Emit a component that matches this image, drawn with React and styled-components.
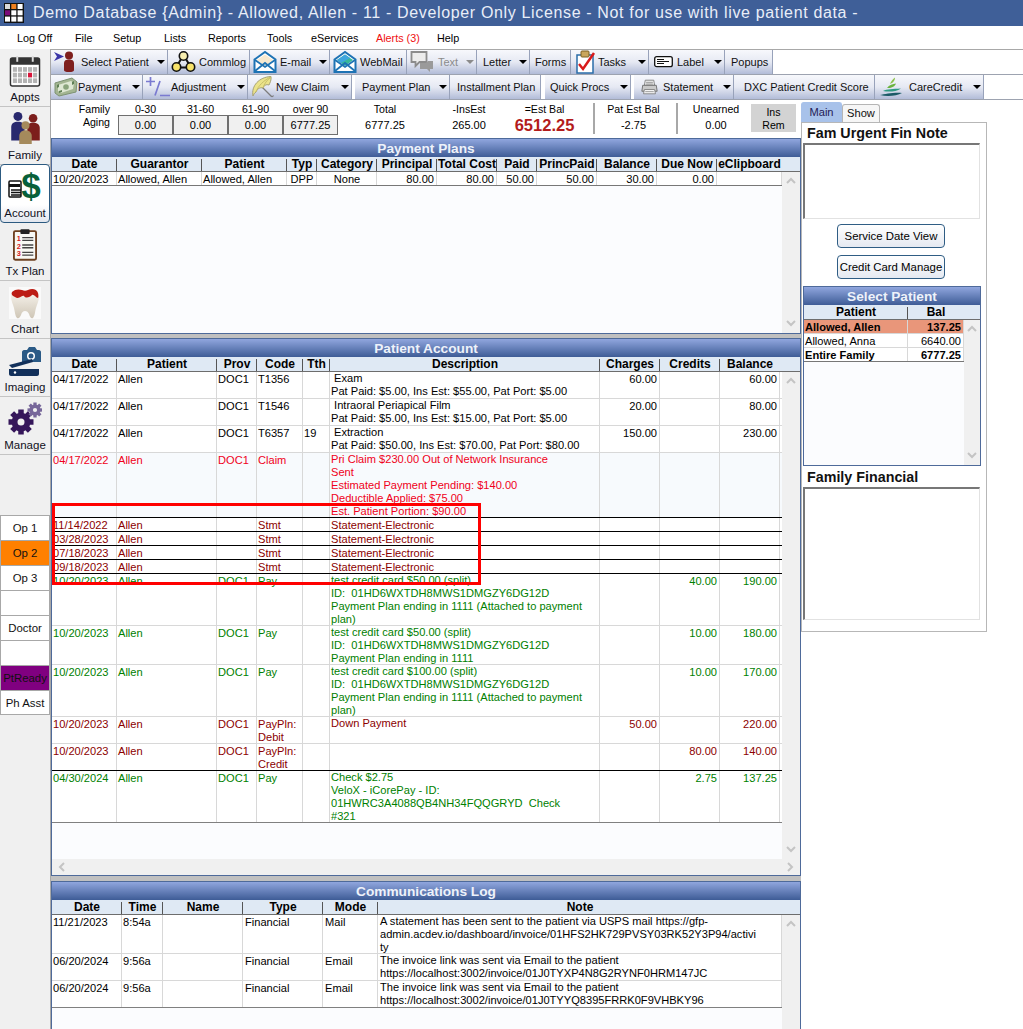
import React from "react";
import styled, { createGlobalStyle } from "styled-components";

const SANS = '"Liberation Sans", Arial, sans-serif';

const Global = createGlobalStyle`
  html, body { margin: 0; padding: 0; background: #fff; }
  body { font-family: ${SANS}; font-size: 11.1px; color: #000; }
  * { box-sizing: border-box; }
`;

const Root = styled.div`
  width: 1023px; height: 1029px; overflow: hidden;
  display: flex; flex-direction: column; background: #fff;
`;
const TitleBar = styled.div`
  height: 26px; flex: none; background: #3f5f98; color: #e9eef8;
  display: flex; align-items: center; padding-left: 4px; gap: 9px;
  font-size: 16px; letter-spacing: 0.65px; white-space: pre;
`;
const MenuBar = styled.div`
  height: 23px; flex: none; display: flex; align-items: center; padding-left: 17px;
  background: #fff; font-size: 10.8px;
`;
const MenuItem = styled.div`
  width: ${p => p.$w}px; flex: none; color: ${p => (p.$alert ? "#f01010" : "#000")};
`;
const Body = styled.div`
  flex: 1; display: flex; min-height: 0;
`;
const Rail = styled.div`
  width: 51px; flex: none; background: #f0f0f0; border-right: 1px solid #a8a8a8;
  display: flex; flex-direction: column;
`;
const RailButton = styled.div`
  height: 58px; width: 50px; flex: none; display: flex; flex-direction: column;
  align-items: center; justify-content: flex-end; padding-bottom: 2px;
  border-bottom: 1px solid #c4c4c4; font-size: 11.5px; line-height: 14px;
  color: #112; background: ${p => (p.$active ? "linear-gradient(#fff 70%, #e2e6ee)" : "transparent")};
  ${p => p.$active && "border: 1px solid #2c5a80; border-radius: 4px; margin-top:-1px; height:59px;"}
  svg { display: block; margin-bottom: 3px; flex: none; }
`;
const OpStack = styled.div`
  margin-top: 60px; display: flex; flex-direction: column;
`;
const OpButton = styled.div`
  height: 25px; width: 50px; background: ${p => p.$bg || "#fff"};
  border: 1px solid #a8a8a8; border-bottom-width: 0; display: flex;
  align-items: center; justify-content: center; font-size: 11.4px;
  color: #111; &:last-child { border-bottom-width: 1px; }
`;
const Main = styled.div`
  flex: 1; min-width: 0; display: flex; flex-direction: column;
`;
const Toolbars = styled.div`
  flex: none; border-top: 1px solid #a8a8a8;
`;
const ToolRow = styled.div`
  height: 25px; display: flex; border-bottom: 1px solid #9da3b0; background: #fff;
`;
const ToolButton = styled.div`
  width: ${p => p.$w}px; flex: none; height: 24px; display: flex; align-items: center;
  padding-left: ${p => p.$pl || 3}px; margin-left: ${p => p.$gap || 0}px;
  background: linear-gradient(#f7f8fc, #e6e9f3 50%, #b2bcd8);
  border-right: 1px solid #98a2ba; white-space: nowrap;
  font-size: 11px; color: ${p => (p.$off ? "#8b8b8b" : "#111")};
  svg { flex: none; margin-right: ${p => p.$iconGap ?? 3}px; }
`;
const Caret = styled.span`
  margin-left: auto; margin-right: 2px; width: 0; height: 0; flex: none;
  border-left: 4px solid transparent; border-right: 4px solid transparent;
  border-top: 4px solid ${p => (p.$off ? "#8b8b8b" : "#000")};
`;
const Lower = styled.div`
  flex: 1; min-height: 0; display: flex;
`;
const LeftCol = styled.div`
  width: 750px; flex: none; display: flex; flex-direction: column; background: #c0c0c0;
`;
const AgingBar = styled.div`
  height: 38px; flex: none; display: flex; background: #fff; padding-top: 3px; line-height: 13px;
  font-size: 10.6px;
`;
const FamilyLabel = styled.div`
  width: 59px; flex: none; text-align: right;
`;
const AgingColumns = styled.div`
  margin-left: 8px; display: grid; grid-template-columns: repeat(4, 55px); flex: none; width: 220px;
`;
const AgingColumn = styled.div`
  display: flex; flex-direction: column; align-items: center;
`;
const AgingCaption = styled.div`
  height: 12px; line-height: 12px;
`;
const AgingBox = styled.div`
  width: 55px; height: 20px; border: 1px solid #6f6f6f; background: #f0f0f0; text-align: center;
  line-height: 19px; font-size: 11px;
`;
const Stat = styled.div`
  width: ${p => p.$w}px; margin-left: ${p => p.$ml || 0}px; margin-right: ${p => p.$mr || 0}px;
  flex: none; text-align: center; display: flex; flex-direction: column; gap: 2px;
`;
const StatValue = styled.div`
  font-size: ${p => (p.$big ? "16.5px" : "11px")}; font-weight: ${p => (p.$big ? 700 : 400)};
  color: ${p => (p.$big ? "#b31b1b" : "inherit")}; line-height: 15px;
`;
const StatDivider = styled.div`
  width: 2px; height: 31px; background: #a8a8a8; flex: none;
`;
const InsRem = styled.div`
  width: 45px; height: 28px; margin-top: 1px; background: #d3d3d3; flex: none; text-align: center; padding-top: 2px;
`;
const Panel = styled.div`
  height: ${p => p.$h}px; margin-top: ${p => p.$mt || 0}px; flex: none; border: 1px solid #4e6a9a;
  background: #fbfcfe; display: flex; flex-direction: column; overflow: hidden;
`;
const PanelTitle = styled.div`
  height: 18px; flex: none; line-height: 19px; text-align: center; color: #eef2fa;
  font-weight: 700; font-size: 13.7px;
  background: linear-gradient(#90a6de, #3e5c96);
`;
const HeaderRow = styled.div`
  height: 15px; flex: none; display: grid; grid-template-columns: ${p => p.$cols};
  background: #dfe9f4; border-bottom: 1px solid #6d6d6d;
`;
const HeaderCell = styled.div`
  position: relative; text-align: center; font-weight: 700; font-size: 12px; line-height: 15px;
  white-space: nowrap; overflow: visible;
  &::after {
    content: ${p => (p.$last ? "none" : '""')}; position: absolute; right: 0; top: 2px; bottom: 1px;
    width: 1px; background: #555;
  }
`;
const GridBody = styled.div`
  flex: 1; min-height: 0; display: flex;
`;
const GridTable = styled.div`
  width: ${p => p.$w}px; flex: none;
`;
const Row = styled.div`
  height: ${p => p.$h}px; display: grid; grid-template-columns: ${p => p.$cols};
  border-bottom: 1px solid ${p => p.$line || "#d8d8d8"};
  background: ${p => p.$bg || "#fff"}; color: ${p => p.$color || "#000"};
  line-height: 13px; overflow: hidden;
`;
const Cell = styled.div`
  border-right: 1px solid #d8d8d8;
  padding: ${p => (p.$flush ? 0 : 1)}px ${p => (p.$align === "right" ? 2 : 0)}px 0 ${p => (p.$align === "right" ? 0 : p.$pl ?? 1)}px;
  text-align: ${p => p.$align || "left"}; white-space: pre; overflow: hidden;
  font-weight: ${p => (p.$bold ? 700 : 400)};
`;
const VScroll = styled.div`
  flex: 1; min-width: 0; background: #f0f0f0; display: flex; flex-direction: column;
  justify-content: space-between; align-items: center; padding: 5px 0 6px;
`;
const HScroll = styled.div`
  height: 16px; flex: none; background: #f0f0f0; display: flex; justify-content: space-between;
  align-items: center; padding: 0 6px;
`;
const Overlay = styled.div`
  position: relative;
`;
const Highlight = styled.div`
  position: absolute; left: 1px; top: 169px; width: 429px; height: 82px; border: 3px solid #f00; pointer-events: none;
`;
const RightCol = styled.div`
  width: 186px; flex: none; padding-top: 2px;
`;
const Tabs = styled.div`
  height: 20px; display: flex; align-items: flex-end;
`;
const Tab = styled.div`
  height: ${p => (p.$on ? 20 : 18)}px; width: ${p => (p.$on ? 41 : 38)}px; text-align: center;
  line-height: ${p => (p.$on ? 19 : 17)}px; border-radius: 3px 3px 0 0;
  background: ${p => (p.$on ? "#a8c2ea" : "#f6f6f6")}; color: ${p => (p.$on ? "#241a55" : "#111")};
  border: 1px solid ${p => (p.$on ? "#a8c2ea" : "#b5b5b5")}; border-bottom: 0;
`;
const SidePanel = styled.div`
  height: 510px; border: 1px solid #b7b7b7; background: #fff; padding: 2px 1px 0 1px;
  display: flex; flex-direction: column; align-items: flex-start;
`;
const SideHeading = styled.div`
  font-weight: 700; font-size: 14.3px; line-height: 17px; padding-left: 4px; height: 18px; margin-top: ${p => p.$mt || 0}px; color: #111;
`;
const NoteBox = styled.div`
  width: 177px; height: ${p => p.$h}px; border-style: solid; border-width: 2px 1px 1px 2px;
  border-color: #777 #e2e2e2 #e2e2e2 #777; background: #fff; flex: none;
`;
const SideButton = styled.div`
  width: 108px; height: 24px; border: 1px solid #2f5d84; border-radius: 4px; margin: ${p => p.$mt}px 0 0 34px;
  background: linear-gradient(#fff, #e5e9f1); display: flex; align-items: center; justify-content: center;
  white-space: nowrap; flex: none; font-size: 11.4px;
`;
const SelectPanel = styled(Panel)`
  width: 178px;
`;

const Chevron = ({ dir }) => {
  const pts = { up: "1,6 5,2 9,6", down: "1,2 5,6 9,2", left: "6,1 2,5 6,9", right: "2,1 6,5 2,9" }[dir];
  const w = dir === "left" || dir === "right" ? 8 : 10;
  const h = dir === "left" || dir === "right" ? 10 : 8;
  return (
    <svg width={w} height={h} viewBox={`0 0 ${w} ${h}`}>
      <polyline points={pts} fill="none" stroke="#c4c4c4" strokeWidth="2" />
    </svg>
  );
};

const Logo = () => (
  <svg width="20" height="20" viewBox="0 0 20 20">
    <rect width="20" height="20" fill="#111" />
    {[0, 1, 2].flatMap(r => [0, 1, 2].map(c => {
      const fill = r === 0 && c === 1 ? "#f08020" : r === 1 && c === 0 ? "#7a0a7a" : r === 0 && c === 0 ? "#d8d8d8" : "#fff";
      return <rect key={`${r}${c}`} x={1 + c * 6.3} y={1 + r * 6.3} width="5" height="5" fill={fill} />;
    }))}
  </svg>
);

const IcoSelect = () => (
  <svg width="25" height="24" viewBox="0 0 25 24">
    <path d="M1 2l10 4.5L1 11l3-4.5z" fill="#3a35a8" />
    <circle cx="16" cy="5.5" r="4" fill="#7e1f1f" />
    <path d="M11 20v-7c0-2.5 2-3.5 5-3.5s5 1 5 3.5v7c0 1.5-1.5 2-5 2s-5-.5-5-2z" fill="#7e1f1f" />
  </svg>
);
const IcoCommlog = () => (
  <svg width="25" height="24" viewBox="0 0 25 24">
    <path d="M12.5 5L5 17.5h15z" fill="none" stroke="#111" strokeWidth="2" />
    <circle cx="12.5" cy="6" r="4.2" fill="#f7eeb0" stroke="#111" strokeWidth="1.6" />
    <circle cx="5.5" cy="17" r="4.2" fill="#f7e26a" stroke="#111" strokeWidth="1.6" />
    <circle cx="19.5" cy="17" r="4.2" fill="#f7e26a" stroke="#111" strokeWidth="1.6" />
  </svg>
);
const IcoMail = ({ web }) => (
  <svg width="24" height="24" viewBox="0 0 24 24">
    <path d="M1.5 9.5L12 2l10.500 7.500V22h-21z" fill="#fff" stroke="#1e73b4" strokeWidth="2" />
    <path d="M4 10l8-5.500L20 10l-8 6z" fill={web ? "#38b89a" : "#f7e9cf"} />
    {web && <path d="M4 10l8-5.500 5 3.500-9 5z" fill="#3fa6de" />}
    <path d="M2 21l10-8 10 8M2 10l10 7 10-7" fill="none" stroke="#1e73b4" strokeWidth="1.800" />
  </svg>
);
const IcoText = () => (
  <svg width="25" height="24" viewBox="0 0 25 24">
    <path d="M1.500 2h15v10h-7l-4 4v-4h-4z" fill="#ececec" stroke="#8c8c8c" strokeWidth="1.800" />
    <path d="M10 13h6l2-2h5v8h-3v3l-3-3h-7z" fill="#9a9a9a" />
  </svg>
);
const IcoMoney = () => (
  <svg width="24" height="20" viewBox="0 0 24 20">
    <path d="M1 6l17-5 5 4-1 10-17 4-4-3z" fill="#a3b592" stroke="#7d9272" />
    <path d="M4 8l13-4 3 2-1 6-12 4-3-2z" fill="#dfe8d4" />
    <circle cx="12" cy="10" r="2.800" fill="#8aa47c" />
    <path d="M3 8l2-1v3l-2 1zM18 5l2-1v3l-2 1zM5 14l3-1v2l-3 1z" fill="#5f7f55" />
  </svg>
);
const IcoAdjust = () => (
  <svg width="25" height="22" viewBox="0 0 25 22">
    <path d="M0 5.500h9M4.500 1v9M9 19.500L14 5M14 19.500h10" stroke="#7a7ad0" strokeWidth="1.700" fill="none" />
  </svg>
);
const IcoUmbrella = () => (
  <svg width="25" height="24" viewBox="0 0 25 24">
    <path d="M11 12l9 9c1 1 2 .500 2.500-.500" fill="none" stroke="#7c7c7c" strokeWidth="1.300" />
    <path d="M2 21C0 11 8 2 20 1.500c.5 4-1 6-2 8.500-3-1-5 .5-6 3-3-1-6 1-7 4-1.500 1-2.500 2.500-3 4z" fill="#ebe38a" stroke="#a7a278" />
    <path d="M5 17C7 11 13 5 20 2M12 13c1-4 4-8 8-11" fill="none" stroke="#c9c06a" />
  </svg>
);
const IcoPrinter = () => (
  <svg width="17" height="16" viewBox="0 0 20 18">
    <path d="M5 1h10l1 6H4z" fill="#f2f2f2" stroke="#777" />
    <path d="M2 7h16l1 7H1z" fill="#c9c9c9" stroke="#666" />
    <path d="M4 12h12l1 5H3z" fill="#fafafa" stroke="#777" />
    <path d="M6 3.500h8M6 5.500h8M5 14.500h10" stroke="#888" />
  </svg>
);
const IcoTasks = () => (
  <svg width="20" height="24" viewBox="0 0 20 24">
    <rect x="1" y="5" width="16" height="18" fill="#fff" stroke="#2a6ca8" strokeWidth="1.500" />
    <rect x="5" y="1" width="8" height="6" rx="1" fill="#c9a65c" stroke="#7c6020" />
    <path d="M3 14l4 5L18 3" fill="none" stroke="#d81a1a" strokeWidth="2.500" />
  </svg>
);
const IcoLabel = () => (
  <svg width="19" height="12" viewBox="0 0 19 12">
    <rect x=".7" y=".7" width="17.600" height="10" rx="2" fill="#fff" stroke="#111" strokeWidth="1.300" />
    <path d="M3 3.500h7M3 5.500h12M3 7.500h7" stroke="#111" />
  </svg>
);
const IcoCare = () => (
  <svg width="24" height="20" viewBox="0 0 24 20">
    <path d="M1 18C6 17 16 15 23 16c-5 3-15 4-22 2z" fill="#1a5a66" />
    <path d="M4 14C8 12 14 12 22 11.500 17 15 9 15 4 14z" fill="#2f9a84" />
    <path d="M8 11c2-3 6-4 9-4.500-1 3-5 5-9 4.500z" fill="#6cb33f" />
    <path d="M11 7c1-3 3-5 5-6.500 0 2-1 5-5 6.500z" fill="#8cc24a" />
  </svg>
);

const BigCalendar = () => (
  <svg width="32" height="32" viewBox="0 0 32 33">
    <rect x="1" y="3" width="30" height="29" rx="2" fill="#fff" stroke="#333" strokeWidth="1.500" />
    <path d="M1 10V5c0-1.500 1-2 2-2h26c1 0 2 .5 2 2v5z" fill="#333" />
    <rect x="7" y="1" width="2" height="6" fill="#ddd" /><rect x="23" y="1" width="2" height="6" fill="#ddd" />
    {[0, 1, 2].flatMap(r => [0, 1, 2, 3, 4].map(c => (
      <rect key={`${r}-${c}`} x={3.5 + c * 5.2} y={12.5 + r * 5.8} width="4.200" height="4.800"
        fill={r === 1 && c === 3 ? "#d8143a" : "#b4b4b4"} />
    )))}
  </svg>
);
const BigFamily = () => (
  <svg width="31" height="33" viewBox="0 0 34 37">
    <circle cx="8.500" cy="5" r="5" fill="#29296e" />
    <path d="M1 32V17c0-4 3-6 7.500-6S16 13 16 17v15z" fill="#29296e" />
    <circle cx="25.500" cy="7" r="4.800" fill="#7c1e1c" />
    <path d="M19 32V18c0-4 2-6 6.500-6s7.500 2 7.500 6v14z" fill="#7c1e1c" />
    <circle cx="17" cy="15" r="4.500" fill="#a58a5c" />
    <path d="M10 36V27c0-4 3-6.500 7-6.500s7 2.500 7 6.500v9z" fill="#a58a5c" />
  </svg>
);
const BigAccount = () => (
  <svg width="34" height="32" viewBox="0 0 34 32" overflow="visible">
    <rect x="1" y="10" width="12" height="16" rx="1" fill="#fff" stroke="#111" strokeWidth="1.500" />
    <rect x="1" y="13" width="11" height="3" fill="#111" />
    <path d="M3 19h10M3 21.500h10M3 24h10" stroke="#111" strokeWidth="1.300" />
    <text x="23" y="27" textAnchor="middle" fontFamily={SANS} fontWeight="700" fontSize="35" fill="#07603a">$</text>
  </svg>
);
const BigClipboard = () => (
  <svg width="24" height="33" viewBox="0 0 26 35">
    <rect x="1" y="3" width="24" height="31" rx="1.500" fill="#f8f8f4" stroke="#6d4020" strokeWidth="2" />
    <rect x="8" y="1" width="10" height="5" rx="1" fill="#222" />
    <text x="4" y="14" fontFamily={SANS} fontWeight="700" fontSize="8" fill="#d81a1a">1</text>
    <text x="4" y="22" fontFamily={SANS} fontWeight="700" fontSize="8" fill="#d81a1a">2</text>
    <text x="4" y="30" fontFamily={SANS} fontWeight="700" fontSize="8" fill="#d81a1a">3</text>
    <path d="M10 10h12M10 13h12M10 18h12M10 21h12M10 26h12M10 29h12" stroke="#444" strokeWidth="1.500" />
  </svg>
);
const BigTooth = () => (
  <svg width="32" height="32" viewBox="0 0 32 32">
    <defs>
      <linearGradient id="toothShade" x1="0" y1="0" x2="0" y2="1">
        <stop offset="0" stopColor="#fbf8f2" />
        <stop offset="1" stopColor="#cfc6b6" />
      </linearGradient>
    </defs>
    <rect width="32" height="32" fill="#fafafa" />
    <path d="M2 9C2 3 8 1 13 3c2 1 4 1 6 0 5-2 11 0 11 6 0 5-2 8-3 12-1 3-1 8-3 10-2 1-3-1-4-4-1-2-2-3-4-3s-3 1-4 4c-1 2-2 4-4 3-2-2-2-6-3-10C4 17 2 14 2 9z" fill="url(#toothShade)" />
    <path d="M3 5c3-3 7-3 10-2 2 1 4 1 6 0 4-2 9-1 10 3 .5 2 .5 4 0 5-2 0-4-4-6-3-2 2-6 4-8 1-2-1-5 4-9 1C3 9 2 7 3 5z" fill="#bc1c14" />
  </svg>
);
const BigImaging = () => (
  <svg width="34" height="33" viewBox="0 0 34 33">
    <path d="M14 8c0-1 1-2 2-2h3l2-3h6l2 3h2c1 0 2 1 2 2v10H14z" fill="#2a5a86" />
    <circle cx="23" cy="12" r="4" fill="#fff" /><circle cx="23" cy="12" r="2.500" fill="#2a5a86" />
    <path d="M1 21L24 15l1 3L4 24z" fill="#12305a" />
    <path d="M1 25h30v5c0 1-1 2-2 2H3c-1 0-2-1-2-2z" fill="#12305a" />
    <circle cx="7" cy="28.500" r="1.200" fill="#fff" />
  </svg>
);
const Gear = ({ cx, cy, r, teeth, fill }) => (
  <g>
    {Array.from({ length: teeth }, (_, i) => (
      <rect key={i} x={cx - r * 0.22} y={cy - r} width={r * 0.44} height={r * 2} fill={fill}
        transform={`rotate(${(180 / teeth) * i} ${cx} ${cy})`} />
    ))}
    <circle cx={cx} cy={cy} r={r * 0.75} fill={fill} />
    <circle cx={cx} cy={cy} r={r * 0.28} fill="#f0f0f0" />
  </g>
);
const BigManage = () => (
  <svg width="34" height="33" viewBox="0 0 34 33">
    <Gear cx={13} cy={20} r={12.500} teeth={4} fill="#35165a" />
    <Gear cx={27} cy={8} r={7.500} teeth={4} fill="#77679a" />
  </svg>
);

const PP_COLS = "65px 85px 85px 30px 60px 60px 60px 40px 60px 60px 60px 65px";
const PA_COLS = "65px 100px 40px 46px 27px 270px 60px 60px 60px";
const CL_COLS = "70px 41px 80px 80px 55px 404px";
const SP_COLS = "104px 56px";

const ppHead = ["Date", "Guarantor", "Patient", "Typ", "Category", "Principal", "Total Cost", "Paid", "PrincPaid", "Balance", "Due Now", "eClipboard"];
const paHead = ["Date", "Patient", "Prov", "Code", "Tth", "Description", "Charges", "Credits", "Balance"];
const clHead = ["Date", "Time", "Name", "Type", "Mode", "Note"];

const GREEN = "#008000";
const MAROON = "#8b0000";
const RED = "#f00020";
const paRows = [
  { h: 27, d: "04/17/2022", c: "T1356", p: "DOC1", desc: [" Exam", "Pat Paid: $5.00, Ins Est: $55.00, Pat Port: $5.00"], ch: "60.00", bal: "60.00" },
  { h: 27, d: "04/17/2022", c: "T1546", p: "DOC1", desc: [" Intraoral Periapical Film", "Pat Paid: $5.00, Ins Est: $15.00, Pat Port: $5.00"], ch: "20.00", bal: "80.00" },
  { h: 27, d: "04/17/2022", c: "T6357", p: "DOC1", t: "19", desc: [" Extraction", "Pat Paid: $50.00, Ins Est: $70.00, Pat Port: $80.00"], ch: "150.00", bal: "230.00" },
  { h: 65, d: "04/17/2022", c: "Claim", p: "DOC1", color: RED, bg: "#f7fafd", line: "#000", desc: ["Pri Claim $230.00 Out of Network Insurance", "Sent", "Estimated Payment Pending: $140.00", "Deductible Applied: $75.00", "Est. Patient Portion: $90.00"] },
  { h: 14, d: "11/14/2022", c: "Stmt", color: MAROON, line: "#000", desc: ["Statement-Electronic"], descPad: true },
  { h: 14, d: "03/28/2023", c: "Stmt", color: MAROON, line: "#000", desc: ["Statement-Electronic"], descPad: true },
  { h: 14, d: "07/18/2023", c: "Stmt", color: MAROON, line: "#000", desc: ["Statement-Electronic"], descPad: true },
  { h: 14, d: "09/18/2023", c: "Stmt", color: MAROON, line: "#000", desc: ["Statement-Electronic"], descPad: true },
  { h: 52, d: "10/20/2023", c: "Pay", p: "DOC1", color: GREEN, desc: ["test credit card $50.00 (split)", "ID:  01HD6WXTDH8MWS1DMGZY6DG12D", "Payment Plan ending in 1111 (Attached to payment", "plan)"], cr: "40.00", bal: "190.00" },
  { h: 39, d: "10/20/2023", c: "Pay", p: "DOC1", color: GREEN, desc: ["test credit card $50.00 (split)", "ID:  01HD6WXTDH8MWS1DMGZY6DG12D", "Payment Plan ending in 1111"], cr: "10.00", bal: "180.00" },
  { h: 52, d: "10/20/2023", c: "Pay", p: "DOC1", color: GREEN, desc: ["test credit card $100.00 (split)", "ID:  01HD6WXTDH8MWS1DMGZY6DG12D", "Payment Plan ending in 1111 (Attached to payment", "plan)"], cr: "10.00", bal: "170.00" },
  { h: 27, d: "10/20/2023", c: "PayPln:\nDebit", p: "DOC1", color: MAROON, desc: ["Down Payment"], ch: "50.00", bal: "220.00" },
  { h: 27, d: "10/20/2023", c: "PayPln:\nCredit", p: "DOC1", color: MAROON, line: "#000", desc: [""], cr: "80.00", bal: "140.00" },
  { h: 52, d: "04/30/2024", c: "Pay", p: "DOC1", color: GREEN, line: "#808080", desc: ["Check $2.75", "VeloX - iCorePay - ID:", "01HWRC3A4088QB4NH34FQQGRYD  Check", "#321"], cr: "2.75", bal: "137.25" },
];
const clRows = [
  { h: 39, d: "11/21/2023", t: "8:54a", ty: "Financial", m: "Mail", n: "A statement has been sent to the patient via USPS mail https://gfp-\nadmin.acdev.io/dashboard/invoice/01HFS2HK729PVSY03RK52Y3P94/activi\nty" },
  { h: 27, d: "06/20/2024", t: "9:56a", ty: "Financial", m: "Email", n: "The invoice link was sent via Email to the patient\nhttps://localhost:3002/invoice/01J0TYXP4N8G2RYNF0HRM147JC" },
  { h: 27, d: "06/20/2024", t: "9:56a", ty: "Financial", m: "Email", n: "The invoice link was sent via Email to the patient\nhttps://localhost:3002/invoice/01J0TYYQ8395FRRK0F9VHBKY96", line: "#808080" },
];

const GridHeader = ({ cols, items }) => (
  <HeaderRow $cols={cols}>
    {items.map((t, i) => <HeaderCell key={i} $last={i === items.length - 1}>{t}</HeaderCell>)}
  </HeaderRow>
);

export default function App() {
  return (
    <Root>
      <Global />
      <TitleBar>
        <Logo />
        <span>Demo Database {"{Admin}"} - Allowed, Allen - 11 - Developer Only License - Not for use with live patient data -</span>
      </TitleBar>
      <MenuBar>
        {[["Log Off", 58], ["File", 38], ["Setup", 51], ["Lists", 44], ["Reports", 59], ["Tools", 44], ["eServices", 65]].map(([t, w]) => (
          <MenuItem key={t} $w={w}>{t}</MenuItem>
        ))}
        <MenuItem $w={61} $alert>Alerts (3)</MenuItem>
        <MenuItem $w={40}>Help</MenuItem>
      </MenuBar>
      <Body>
        <Rail>
          <RailButton><BigCalendar />Appts</RailButton>
          <RailButton><BigFamily />Family</RailButton>
          <RailButton $active><BigAccount />Account</RailButton>
          <RailButton><BigClipboard />Tx Plan</RailButton>
          <RailButton><BigTooth />Chart</RailButton>
          <RailButton><BigImaging />Imaging</RailButton>
          <RailButton><BigManage />Manage</RailButton>
          <OpStack>
            <OpButton>Op 1</OpButton>
            <OpButton $bg="#ff8000">Op 2</OpButton>
            <OpButton>Op 3</OpButton>
            <OpButton />
            <OpButton>Doctor</OpButton>
            <OpButton />
            <OpButton $bg="#800080">PtReady</OpButton>
            <OpButton>Ph Asst</OpButton>
          </OpStack>
        </Rail>
        <Main>
          <Toolbars>
            <ToolRow>
              <ToolButton $w={117} $pl={2}><IcoSelect />Select Patient<Caret /></ToolButton>
              <ToolButton $w={82} $pl={3}><IcoCommlog />Commlog</ToolButton>
              <ToolButton $w={80}><IcoMail />E-mail<Caret /></ToolButton>
              <ToolButton $w={77}><IcoMail web />WebMail</ToolButton>
              <ToolButton $w={70} $off><IcoText />Text<Caret $off /></ToolButton>
              <ToolButton $w={53} $pl={6}>Letter<Caret /></ToolButton>
              <ToolButton $w={41} $pl={5}>Forms</ToolButton>
              <ToolButton $w={78} $pl={5} $iconGap={2}><IcoTasks />Tasks<Caret /></ToolButton>
              <ToolButton $w={76} $pl={5} $iconGap={4}><IcoLabel />Label<Caret /></ToolButton>
              <ToolButton $w={48} $pl={6}>Popups</ToolButton>
            </ToolRow>
            <ToolRow>
              <ToolButton $w={92} $iconGap={0}><IcoMoney />Payment<Caret /></ToolButton>
              <ToolButton $w={105} $iconGap={0}><IcoAdjust />Adjustment<Caret /></ToolButton>
              <ToolButton $w={104} $iconGap={0}><IcoUmbrella />New Claim<Caret /></ToolButton>
              <ToolButton $w={95} $gap={3} $pl={7}>Payment Plan<Caret /></ToolButton>
              <ToolButton $w={91} $pl={7}>Installment Plan</ToolButton>
              <ToolButton $w={86} $gap={4} $pl={5}>Quick Procs<Caret /></ToolButton>
              <ToolButton $w={100} $gap={3} $pl={7} $iconGap={5}><IcoPrinter />Statement<Caret /></ToolButton>
              <ToolButton $w={141} $pl={10}>DXC Patient Credit Score</ToolButton>
              <ToolButton $w={109} $pl={4} $iconGap={6}><IcoCare />CareCredit<Caret /></ToolButton>
            </ToolRow>
          </Toolbars>
          <Lower>
            <LeftCol>
              <AgingBar>
                <FamilyLabel>Family<br />Aging</FamilyLabel>
                <AgingColumns>
                  {[["0-30", "0.00"], ["31-60", "0.00"], ["61-90", "0.00"], ["over 90", "6777.25"]].map(([l, v]) => (
                    <AgingColumn key={l}>
                      <AgingCaption>{l}</AgingCaption>
                      <AgingBox>{v}</AgingBox>
                    </AgingColumn>
                  ))}
                </AgingColumns>
                <Stat $w={94}><span>Total</span><StatValue>6777.25</StatValue></Stat>
                <Stat $w={48} $ml={13}><span>-InsEst</span><StatValue>265.00</StatValue></Stat>
                <Stat $w={83} $ml={10} $mr={7}><span>=Est Bal</span><StatValue $big>6512.25</StatValue></Stat>
                <StatDivider />
                <Stat $w={77} $mr={4}><span>Pat Est Bal</span><StatValue>-2.75</StatValue></Stat>
                <StatDivider />
                <Stat $w={70} $ml={3}><span>Unearned</span><StatValue>0.00</StatValue></Stat>
                <InsRem>Ins<br />Rem</InsRem>
              </AgingBar>
              <Panel $h={196}>
                <PanelTitle>Payment Plans</PanelTitle>
                <GridHeader cols={PP_COLS} items={ppHead} />
                <GridBody>
                  <GridTable $w={730}>
                    <Row $h={14} $cols={PP_COLS} $line="#777">
                      <Cell>10/20/2023</Cell>
                      <Cell>Allowed, Allen</Cell>
                      <Cell>Allowed, Allen</Cell>
                      <Cell $align="center">DPP</Cell>
                      <Cell $align="center">None</Cell>
                      <Cell $align="right">80.00</Cell>
                      <Cell $align="right">80.00</Cell>
                      <Cell $align="right">50.00</Cell>
                      <Cell $align="right">50.00</Cell>
                      <Cell $align="right">30.00</Cell>
                      <Cell $align="right">0.00</Cell>
                      <Cell />
                    </Row>
                  </GridTable>
                  <VScroll><Chevron dir="up" /><Chevron dir="down" /></VScroll>
                </GridBody>
              </Panel>
              <Overlay>
                <Panel $h={538} $mt={4}>
                  <PanelTitle>Patient Account</PanelTitle>
                  <GridHeader cols={PA_COLS} items={paHead} />
                  <GridBody>
                    <GridTable $w={730}>
                      {paRows.map((r, i) => (
                        <Row key={i} $h={r.h} $cols={PA_COLS} $bg={r.bg} $color={r.color} $line={r.line}>
                          <Cell>{r.d}</Cell>
                          <Cell>Allen</Cell>
                          <Cell>{r.p}</Cell>
                          <Cell>{r.c}</Cell>
                          <Cell>{r.t}</Cell>
                          <Cell $flush={!r.descPad}>{r.desc.join("\n")}</Cell>
                          <Cell $align="right">{r.ch}</Cell>
                          <Cell $align="right">{r.cr}</Cell>
                          <Cell $align="right">{r.bal}</Cell>
                        </Row>
                      ))}
                    </GridTable>
                    <VScroll><Chevron dir="up" /><Chevron dir="down" /></VScroll>
                  </GridBody>
                  <HScroll><Chevron dir="left" /><Chevron dir="right" /></HScroll>
                </Panel>
                <Highlight />
              </Overlay>
              <Panel $h={200} $mt={5}>
                <PanelTitle>Communications Log</PanelTitle>
                <GridHeader cols={CL_COLS} items={clHead} />
                <GridBody>
                  <GridTable $w={730}>
                    {clRows.map((r, i) => (
                      <Row key={i} $h={r.h} $cols={CL_COLS} $line={r.line}>
                        <Cell>{r.d}</Cell>
                        <Cell>{r.t}</Cell>
                        <Cell />
                        <Cell $pl={2}>{r.ty}</Cell>
                        <Cell $pl={2}>{r.m}</Cell>
                        <Cell $pl={2} $flush>{r.n}</Cell>
                      </Row>
                    ))}
                  </GridTable>
                  <VScroll><Chevron dir="up" /><Chevron dir="down" /></VScroll>
                </GridBody>
              </Panel>
            </LeftCol>
            <RightCol>
              <Tabs>
                <Tab $on>Main</Tab>
                <Tab>Show</Tab>
              </Tabs>
              <SidePanel>
                <SideHeading>Fam Urgent Fin Note</SideHeading>
                <NoteBox $h={76} />
                <SideButton $mt={5}>Service Date View</SideButton>
                <SideButton $mt={7}>Credit Card Manage</SideButton>
                <SelectPanel $h={180} $mt={7}>
                  <PanelTitle>Select Patient</PanelTitle>
                  <GridHeader cols={SP_COLS} items={["Patient", "Bal"]} />
                  <GridBody>
                    <GridTable $w={160}>
                      <Row $h={14} $cols={SP_COLS} $bg="#e9967a">
                        <Cell $bold>Allowed, Allen</Cell><Cell $bold $align="right">137.25</Cell>
                      </Row>
                      <Row $h={14} $cols={SP_COLS}>
                        <Cell>Allowed, Anna</Cell><Cell $align="right">6640.00</Cell>
                      </Row>
                      <Row $h={14} $cols={SP_COLS} $line="#777">
                        <Cell $bold>Entire Family</Cell><Cell $bold $align="right">6777.25</Cell>
                      </Row>
                    </GridTable>
                    <VScroll><Chevron dir="up" /><Chevron dir="down" /></VScroll>
                  </GridBody>
                </SelectPanel>
                <SideHeading $mt={3}>Family Financial</SideHeading>
                <NoteBox $h={133} />
              </SidePanel>
            </RightCol>
          </Lower>
        </Main>
      </Body>
    </Root>
  );
}
